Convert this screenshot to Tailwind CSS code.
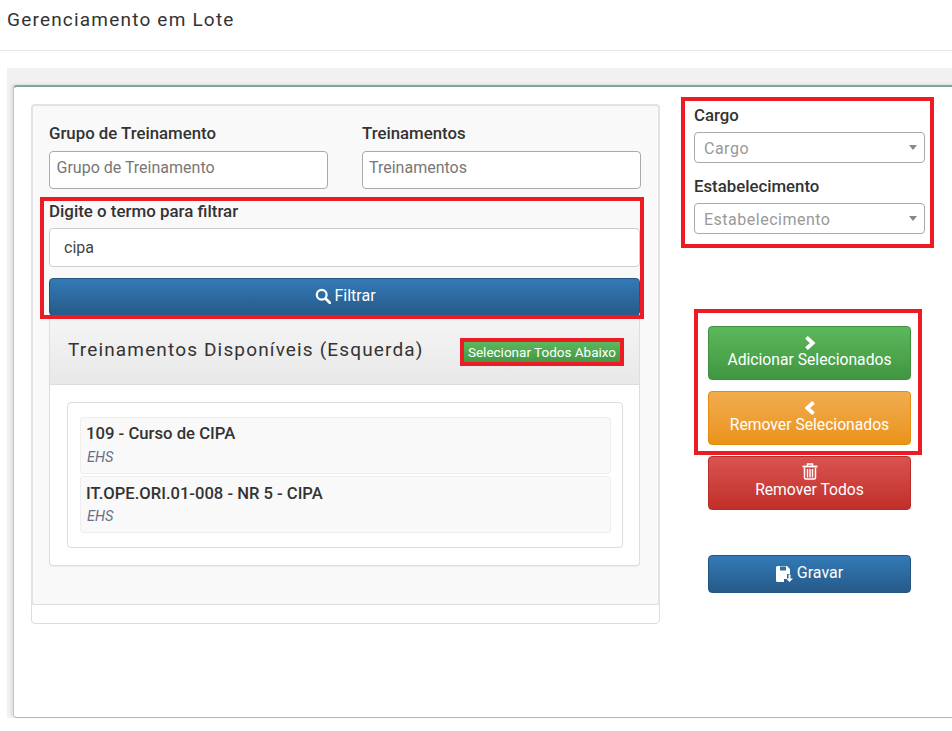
<!DOCTYPE html>
<html lang="pt">
<head>
<meta charset="utf-8">
<title>Gerenciamento em Lote</title>
<script src="https://cdn.jsdelivr.net/npm/@tailwindcss/browser@4"></script>
</head>
<body class="bg-white font-['Roboto',sans-serif] text-[#333] overflow-hidden">
<div class="relative w-[952px] h-[731px] overflow-hidden">
  <header class="h-[51px] border-b border-[#e7e7e7] pl-[7px] pt-[7px]">
    <h1 class="text-[19px] leading-[26px] tracking-[1.2px] text-[#333]">Gerenciamento em Lote</h1>
  </header>

  <div class="mt-[17px] ml-[7px] h-[650px] w-[960px] bg-[#f1f1f1] pt-[17px] pl-[6px]">
    <div class="h-[633px] bg-white rounded-[4px] border-l border-b border-l-[#c4c4c4] border-b-[#b5b5b5] border-t-2 border-t-[#7fa898] flex pl-[17px] pt-[18px] shadow-[-2px_-1px_3px_rgba(0,0,0,0.08)]">

      <section class="w-[629px] h-[519px] shrink-0 border border-[#ddd] rounded-[4px] bg-white">
        <div class="h-[501px] bg-[#f9f9f9] border-b border-x-2 border-x-[#e3e3e3] border-t-2 border-t-[#e3e3e3] border-b-[#ddd] rounded-[4px] px-[16px] pt-[17px] -ml-px -mt-[2px] w-[629px]">
          <div class="flex gap-[34px]">
            <div class="w-[279px]">
              <label class="block -mt-px text-[16.8px] leading-[22px] font-medium mb-[7px] whitespace-nowrap">Grupo de Treinamento</label>
              <input class="block w-full h-[38px] bg-white border border-[#aaa] rounded-[4px] px-[6.500px] pb-[6px] text-[16px] placeholder:text-[#777]" placeholder="Grupo de Treinamento">
            </div>
            <div class="w-[279px]">
              <label class="block -mt-px text-[16.8px] leading-[22px] font-medium mb-[7px]">Treinamentos</label>
              <input class="block w-full h-[38px] bg-white border border-[#aaa] rounded-[4px] px-[6px] pb-[6px] text-[16px] placeholder:text-[#777]" placeholder="Treinamentos">
            </div>
          </div>
          <label class="block mt-[11px] text-[16.900px] leading-[22px] font-medium mb-[6px]">Digite o termo para filtrar</label>
          <input class="block w-[591px] h-[39px] bg-white border border-[#ccc] rounded-[4px] px-[14px] text-[16px] text-[#444]" value="cipa">
          <button class="mt-[11px] flex items-center justify-center gap-[3px] w-[591px] h-[38px] pb-[2px] rounded-[4px] border border-[#245580] bg-linear-to-b from-[#337ab7] to-[#265a88] text-white text-[16px]">
            <svg class="w-[16px] h-[16px] ml-[2px]" viewBox="0 0 16 16" fill="none" stroke="white"><circle cx="6.7" cy="6.7" r="4.9" stroke-width="2.2"/><path d="M10.5 10.5L15 15" stroke-width="2.6" stroke-linecap="round"/></svg>
            <span>Filtrar</span>
          </button>

          <div class="w-[591px] h-[250px] bg-white border-x border-b border-[#ddd] rounded-b-[4px] shadow-[0_1px_1px_rgba(0,0,0,0.05)]">
            <div class="h-[69px] flex items-center justify-between pl-[18px] pr-[19px] border-b border-[#ddd] bg-linear-to-b from-[#f5f5f5] to-[#e8e8e8]">
              <h2 class="mt-px text-[19px] tracking-[1.15px] text-[#333] whitespace-nowrap">Treinamentos Disponíveis (Esquerda)</h2>
              <button class="w-[156px] h-[21px] mt-[5px] bg-linear-to-b from-[#5cb85c] to-[#419641] text-white text-[13.500px] leading-[21px] whitespace-nowrap">Selecionar Todos Abaixo</button>
            </div>
            <div class="ml-[17px] mr-[16px] mt-[17px] h-[146px] border border-[#ddd] rounded-[4px] pl-[12px] pr-[11px] pt-[14px]">
              <div class="h-[57px] bg-[#f9f9f9] border border-[#eee] rounded-[3px] pl-[5px] pt-[5px]">
                <div class="text-[16.700px] leading-[22px] font-medium">109 - Curso de CIPA</div>
                <div class="mt-[3px] ml-px text-[14.500px] leading-[20px] italic text-[#667085]">EHS</div>
              </div>
              <div class="mt-[2px] h-[57px] bg-[#f9f9f9] border border-[#eee] rounded-[3px] pl-[5px] pt-[6px]">
                <div class="text-[16.600px] leading-[22px] font-medium">IT.OPE.ORI.01-008 - NR 5 - CIPA</div>
                <div class="mt-[2px] ml-px text-[14.500px] leading-[20px] italic text-[#667085]">EHS</div>
              </div>
            </div>
          </div>
        </div>
      </section>

      <aside class="ml-[34px] w-[231px] shrink-0">
        <label class="block text-[16.8px] leading-[22px] font-medium -mt-[1px] mb-[6px]">Cargo</label>
        <div class="h-[31px] border border-[#aaa] rounded-[4px] pl-[9px] pr-[7px] pt-[3px] flex items-center justify-between text-[16px] tracking-[0.5px] text-[#999]">
          <span>Cargo</span><span class="-mt-[3px] w-0 h-0 border-x-[4px] border-x-transparent border-t-[5px] border-t-[#888]"></span>
        </div>
        <label class="block mt-[12px] text-[16.8px] leading-[22px] font-medium mb-[6px]">Estabelecimento</label>
        <div class="h-[31px] border border-[#aaa] rounded-[4px] pl-[9px] pr-[7px] pt-[3px] flex items-center justify-between text-[16px] tracking-[0.5px] text-[#999]">
          <span>Estabelecimento</span><span class="-mt-[3px] w-0 h-0 border-x-[4px] border-x-transparent border-t-[5px] border-t-[#888]"></span>
        </div>

        <div class="ml-[14px] mt-[92px] w-[203px] flex flex-col text-white text-[15.700px] leading-[19px]">
          <button class="h-[54px] rounded-[4px] border border-[#3e8f3e] bg-linear-to-b from-[#5cb85c] to-[#419641] flex flex-col items-center pt-[9px]">
            <svg class="w-[12px] h-[14px]" viewBox="0 0 12 14" fill="none" stroke="white" stroke-width="3.800"><path d="M2.500 1.300L8.700 7L2.500 12.700"/></svg>
            <span>Adicionar Selecionados</span>
          </button>
          <button class="mt-[11px] h-[54px] rounded-[4px] border border-[#e38d13] bg-linear-to-b from-[#f0ad4e] to-[#eb9316] flex flex-col items-center pt-[9px]">
            <svg class="w-[12px] h-[14px]" viewBox="0 0 12 14" fill="none" stroke="white" stroke-width="3.800"><path d="M9.500 1.300L3.300 7L9.500 12.700"/></svg>
            <span>Remover Selecionados</span>
          </button>
          <button class="mt-[11px] h-[54px] rounded-[4px] border border-[#b92c28] bg-linear-to-b from-[#d9534f] to-[#c12e2a] flex flex-col items-center pt-[6px]">
            <svg class="w-[16px] h-[17px]" viewBox="0 0 16 17" fill="none" stroke="white"><path d="M0.500 3.500H15.500" stroke-width="1.800"/><path d="M5.500 3V1H10.500V3" stroke-width="1.500"/><path d="M2.500 4.500V15a1.200 1.200 0 0 0 1.200 1H12.300a1.200 1.200 0 0 0 1.200-1V4.500" stroke-width="1.500"/><path d="M5.500 6V14.500M8 6V14.500M10.500 6V14.500" stroke-width="1.400"/></svg>
            <span>Remover Todos</span>
          </button>
          <button class="mt-[45px] h-[38px] pb-[4px] rounded-[4px] border border-[#245580] bg-linear-to-b from-[#337ab7] to-[#265a88] flex items-center justify-center gap-[4px]">
            <svg class="w-[17px] h-[16px] mt-[3px]" viewBox="0 0 17 16"><path fill="white" d="M0 1.500A1.500 1.500 0 0 1 1.500 0H11l3 3v5h-3v5H8v3H1.500A1.500 1.500 0 0 1 0 14.500Z"/><path fill="#2f6fa6" d="M4 0.500h6v4H4Z"/><path fill="white" d="M12.500 8.500h2v4H17l-3.500 3.500L10 12.500h2.500Z"/></svg>
            <span class="text-[16px]">Gravar</span>
          </button>
        </div>
      </aside>
    </div>
  </div>

  <!-- Red annotation boxes drawn over the screenshot -->
  <div class="absolute left-[40px] top-[197px] w-[604px] h-[122px] border-[4px] border-[#ed1c24]"></div>
  <div class="absolute left-[681px] top-[97px] w-[253px] h-[151px] border-[4px] border-[#ed1c24]"></div>
  <div class="absolute left-[694px] top-[309px] w-[228px] h-[146px] border-[4px] border-[#ed1c24]"></div>
  <div class="absolute left-[460px] top-[338px] w-[164px] h-[28px] border-[4px] border-[#ed1c24]"></div>
</div>
</body>
</html>
